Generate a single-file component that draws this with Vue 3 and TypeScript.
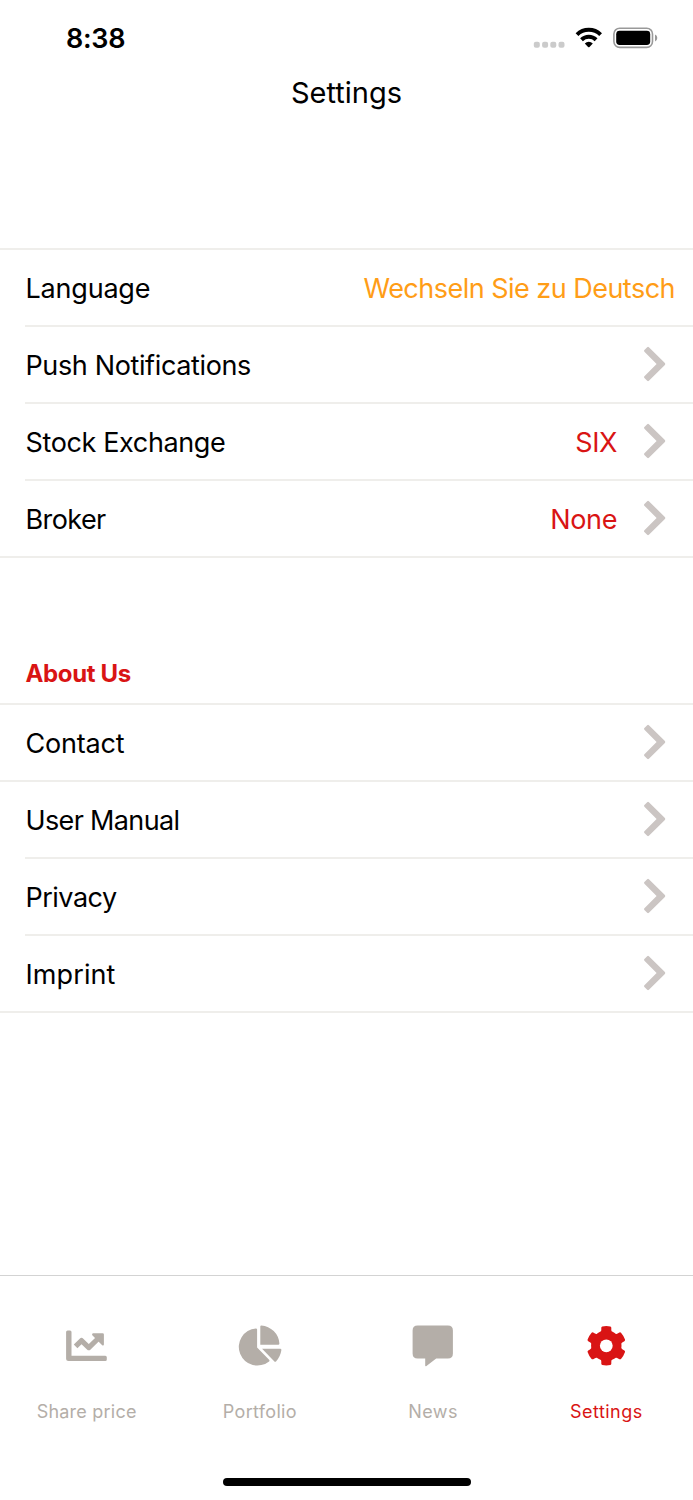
<script setup lang="ts">
interface Row {
  label: string
  name: string
  value?: string
  language?: boolean
  full?: boolean
}

const general: Row[] = [
  { label: 'Language', name: 'language', value: 'Wechseln Sie zu Deutsch', language: true },
  { label: 'Push Notifications', name: 'push' },
  { label: 'Stock Exchange', name: 'exchange', value: 'SIX' },
  { label: 'Broker', name: 'broker', value: 'None', full: true },
]

const about: Row[] = [
  { label: 'Contact', name: 'contact', full: true },
  { label: 'User Manual', name: 'manual' },
  { label: 'Privacy', name: 'privacy' },
  { label: 'Imprint', name: 'imprint', full: true },
]

const groups = [
  { title: '', rows: general },
  { title: 'About Us', rows: about },
]

const tabs = [
  { id: 'share', label: 'Share price' },
  { id: 'portfolio', label: 'Portfolio' },
  { id: 'news', label: 'News' },
  { id: 'settings', label: 'Settings' },
]
</script>

<template>
  <div class="screen">
    <div class="status">
      <span class="time">8:38</span>
      <svg class="indicators" width="126" height="24" viewBox="532 26 126 24">
        <g fill="#cbcbcb">
          <rect x="533.8" y="41.7" width="6" height="6" rx="2" />
          <rect x="542.1" y="41.7" width="6" height="6" rx="2" />
          <rect x="550.3" y="41.7" width="6" height="6" rx="2" />
          <rect x="558.5" y="41.7" width="6" height="6" rx="2" />
        </g>
        <g fill="none" stroke="#000" stroke-width="4">
          <path d="M577 34.6a17 17 0 0 1 23.6 0" />
          <path d="M581.5 39.8a10.5 10.5 0 0 1 14.6 0" />
        </g>
        <path d="M584.8 43.4a6 6 0 0 1 8 0l-3.3 3.6q-.7.7-1.4 0z" />
        <rect x="613.9" y="28.2" width="38.6" height="19.2" rx="5.8" fill="none" stroke="#999" stroke-width="1.6" />
        <rect x="616.2" y="30.8" width="34" height="14.2" rx="3.4" />
        <path d="M655 34.6q2.3 1 2.3 3.4t-2.3 3.4z" fill="#999" />
      </svg>
    </div>
    <h1 class="title"><span>Settings</span></h1>

    <main class="content">
      <section v-for="group in groups" :key="group.title" class="group">
        <h2 v-if="group.title"><span>{{ group.title }}</span></h2>
        <ul>
          <li v-for="row in group.rows" :key="row.name" :class="{ full: row.full }">
            <span :class="['label', row.name]">{{ row.label }}</span>
            <span v-if="row.value" :class="['value', { switcher: row.language }]">{{ row.value }}</span>
            <svg v-if="!row.language" class="chevron" width="24" height="36" viewBox="0 0 24 36">
              <path d="M5.2 1.2q.8-.8 1.7 0L22.9 17q.8 1 0 2L6.9 34.8q-.9.8-1.7 0L2.4 32q-.8-.9 0-1.7L14.6 18 2.4 5.7q-.8-.8 0-1.7z" />
            </svg>
          </li>
        </ul>
      </section>
    </main>

    <nav class="tabs">
      <div v-for="tab in tabs" :key="tab.id" :class="['tab', tab.id]">
        <svg width="48" height="48" viewBox="0 0 48 48">
          <g v-if="tab.id === 'share'" transform="translate(-.6 0)">
            <path d="M5.2 8.6h2.4q1.5 0 1.5 1.5v23.6h33.8q1.5 0 1.5 1.5v2.4q0 1.5-1.5 1.5H6.2q-2.5 0-2.5-2.5V10.1q0-1.5 1.5-1.5z" />
            <path d="M13.2 24.3l5.9-5.7 7.3 7L36.3 16" fill="none" stroke="currentColor" stroke-width="5.2" stroke-linejoin="round" />
            <path d="M30.6 11.3h9.6q1.3 0 1.3 1.3v9.8q-.2 1.8-1.7.8l-9.9-9.9q-.9-1.6.7-2z" />
          </g>
          <g v-else-if="tab.id === 'portfolio'" transform="translate(.7 0)">
            <path d="M19.2 6.4q1.2 0 1.2 1.2v17.8L32.4 37.8q.8.8 0 1.6A18.6 18.6 0 1 1 19.2 6.4z" />
            <path d="M24.6 3.4a19.5 19.5 0 0 1 18.1 18.1q0 1.2-1.2 1.2H23.6V4.6q0-1.2 1-1.2z" />
            <path d="M25.4 26.7h18.1q1.3 0 1.2 1.3-.9 6.6-5.4 11.4-.8.7-1.6 0z" />
          </g>
          <path v-else-if="tab.id === 'news'" transform="translate(0 .4)" d="M8.6 3h30.3q5 0 5 5v23q0 5-5 5H27.2l-10.1 7.8q-.9.4-.9-.7V36H8.6q-5 0-5-5V8q0-5 5-5z" />
          <template v-else>
            <g transform="translate(24.3 23.8)">
              <circle r="15.2" />
              <path v-for="angle in [0, 60, 120, 180, 240, 300]" :key="angle" :transform="`rotate(${angle})`" d="M-6-13q1-1 1-3v-2q0-1 1-1.3 4-.8 8 0 1 .3 1 1.3v2q0 2 1 3z" />
              <circle r="6.4" fill="#fff" />
            </g>
          </template>
        </svg>
        <span>{{ tab.label }}</span>
      </div>
    </nav>
    <div class="home"></div>
  </div>
</template>

<style>
body {
  margin: 0;
  background: #fff;
}
</style>

<style scoped>
.screen {
  display: flex;
  flex-direction: column;
  width: 693px;
  height: 1500px;
  background: #fff;
  color: #000;
  font-family: Inter, "Liberation Sans", sans-serif;
}
.status {
  display: flex;
  justify-content: space-between;
  align-items: center;
  box-sizing: border-box;
  height: 76px;
  padding: 0 35px 0 66px;
}
.time {
  font-size: 27px;
  font-weight: 600;
  letter-spacing: -0.3px;
}
.title {
  height: 34px;
  margin: 0;
  font-size: 29px;
  font-weight: 400;
  line-height: 34px;
  text-align: center;
}
.content {
  flex: 1;
  padding-top: 138px;
}
h2 {
  height: 145px;
  margin: 0;
  padding: 101px 25.5px 0;
  box-sizing: border-box;
  font-size: 24px;
  font-weight: 700;
  line-height: 29px;
  letter-spacing: -0.35px;
  color: #d91414;
}
ul {
  margin: 0;
  padding: 0;
  list-style: none;
  border-top: 2px solid #efeeeb;
}
li {
  display: flex;
  align-items: center;
  box-sizing: border-box;
  height: 77px;
  padding-right: 27px;
  margin-left: 25px;
  border-bottom: 2px solid #efeeeb;
  font-size: 27px;
  line-height: 33px;
  white-space: nowrap;
}
li.full {
  margin-left: 0;
  padding-left: 25px;
}
.label {
  flex: 1;
  padding: 2px 0 0 0.5px;
  letter-spacing: -0.37px;
}
.label.language,
.label.contact {
  letter-spacing: -0.2px;
}
.label.broker {
  letter-spacing: -0.6px;
}
.label.manual {
  letter-spacing: -0.65px;
}
.label.privacy {
  letter-spacing: -0.5px;
}
.label.imprint {
  letter-spacing: 0.1px;
}
.value {
  padding-top: 2px;
  margin-right: 25px;
  letter-spacing: -0.4px;
  color: #d91414;
}
.value.switcher {
  margin-right: -9px;
  letter-spacing: -0.52px;
  color: #ff9d17;
}
.chevron {
  margin-top: -1px;
  fill: #cbc5c3;
}
.tabs {
  display: flex;
  box-sizing: border-box;
  height: 207px;
  padding-top: 46px;
  border-top: 1px solid #d3d3d3;
}
.tab {
  display: flex;
  flex: 1;
  flex-direction: column;
  align-items: center;
  gap: 29px;
  color: #b4aea8;
  font-size: 18px;
  line-height: 25px;
  letter-spacing: 0.45px;
}
.tab.share {
  letter-spacing: 0.22px;
}
.tab.portfolio {
  letter-spacing: 0.32px;
}
.tab svg {
  fill: currentColor;
}
.tab.settings {
  color: #d91414;
}
.home {
  width: 248px;
  height: 8px;
  margin: -4px auto 14px;
  border-radius: 4px;
  background: #000;
}
</style>
